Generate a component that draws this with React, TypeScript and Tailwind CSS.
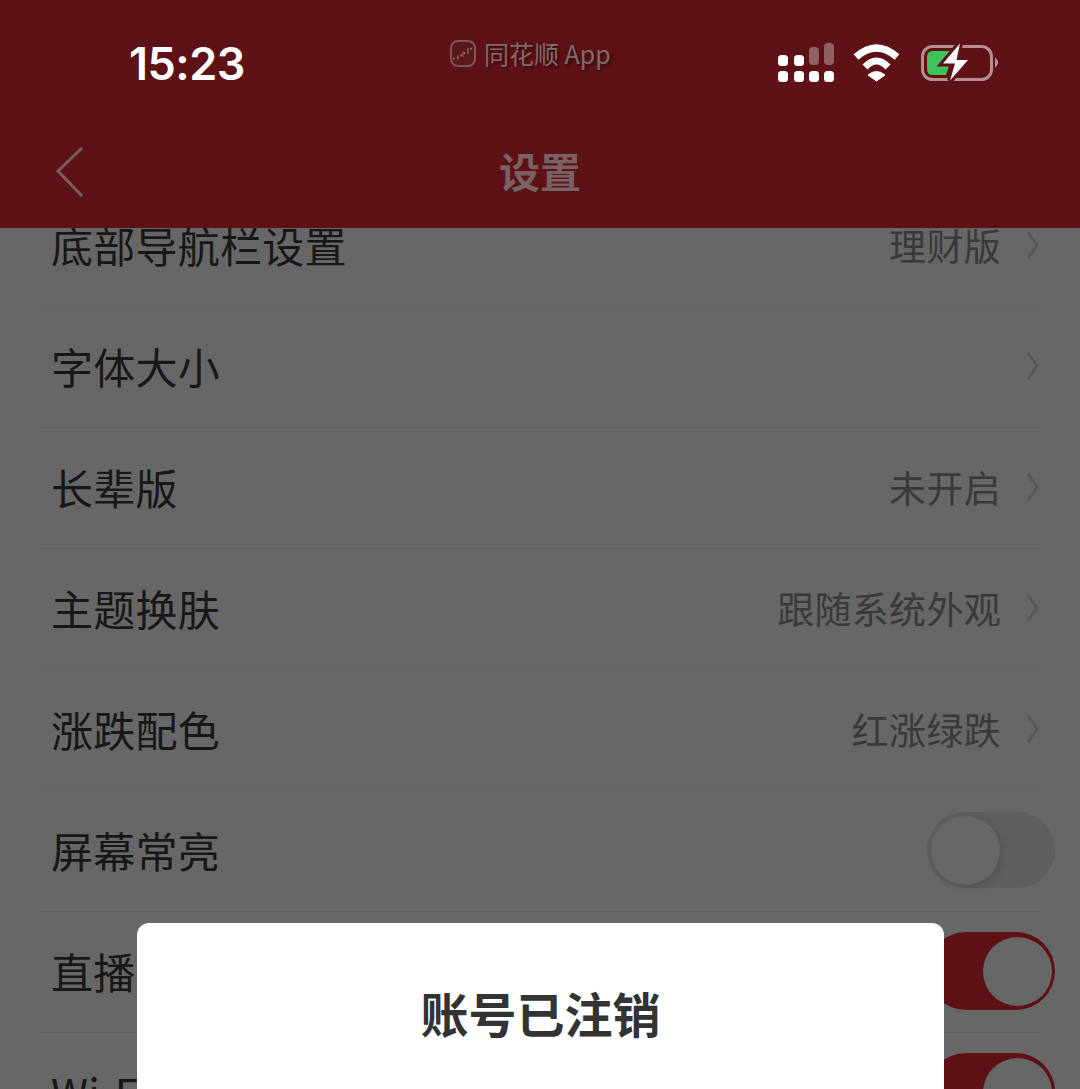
const CJK = "font-['Noto_Sans_CJK_SC','Noto_Sans',sans-serif]"

/* Lignes de la liste des réglages */
const rows = [
    { label: '底部导航栏设置', value: '理财版', first: true },
    { label: '字体大小' },
    { label: '长辈版', value: '未开启' },
    { label: '主题换肤', value: '跟随系统外观' },
    { label: '涨跌配色', value: '红涨绿跌' },
    { label: '屏幕常亮', toggle: 'off' },
    { label: '直播小窗', toggle: 'on' },
    { label: 'Wi-Fi下自动播放', toggle: 'on' },
]

const Chevron = () => (
    <svg width="14" height="32" viewBox="0 0 14 32" fill="none" className="ml-[25px] shrink-0">
        <path d="M2 3 L11 16 L2 29" stroke="#575757" strokeWidth="2.5" />
    </svg>
)

const Toggle = ({ on }: { on: boolean }) => {
    if (on) {
        return (
            <div className="absolute right-[-15px] top-[20px] flex h-[78px] w-[128px] items-center justify-end rounded-full bg-[#5f1215] pr-[3px]">
                <div className="h-[69px] w-[69px] rounded-full bg-[#676767]" />
            </div>
        )
    }
    return (
        <div className="absolute right-[-15px] top-[21px] flex h-[76px] w-[128px] items-center rounded-full bg-[#5f5f5f] pl-[4px]">
            <div className="h-[69px] w-[69px] rounded-full bg-[#676767] shadow-[3px_3px_8px_rgba(0,0,0,0.12)]" />
        </div>
    )
}

const Row = ({ row }: { row: any }) => (
    <div className="relative mx-[40px] flex h-[121px] items-center border-b border-[#606060] pb-[2px] pl-[11px]">
        <span className={`${CJK} text-[42px] leading-none tracking-[0.25px] text-[#181818]`}>{row.label}</span>
        {row.value !== undefined || !row.toggle ? (
            <div className="ml-auto flex items-center">
                {row.value && <span className={`${CJK} text-[37px] leading-none tracking-[0.3px] text-[#3a3a3a]`}>{row.value}</span>}
                <Chevron />
            </div>
        ) : (
            <Toggle on={row.toggle === 'on'} />
        )}
    </div>
)

const StatusIcons = () => (
    <svg width="224" height="44" viewBox="0 0 224 44" fill="none">
        {/* réseau */}
        <g fill="#ffffff">
            <rect x="0" y="13" width="10" height="11" rx="3.5" />
            <rect x="16" y="13" width="10" height="11" rx="3.5" />
            <rect x="0" y="29" width="10" height="11" rx="3.5" />
            <rect x="16" y="29" width="10" height="11" rx="3.5" />
            <rect x="31" y="29" width="10" height="11" rx="3.5" />
            <rect x="46" y="29" width="10" height="11" rx="3.5" />
        </g>
        <rect x="31" y="5" width="10" height="18" rx="4" fill="#8f6162" />
        <rect x="46" y="1" width="10" height="22" rx="4" fill="#8f6162" />
        {/* wifi */}
        <g stroke="#ffffff" strokeWidth="7" fill="none">
            <path d="M78 15 Q98.5 -3 119 15" />
            <path d="M87 25 Q98.5 13 110 25" />
        </g>
        <path d="M90 33 Q98.5 26 107 33 L98.5 39 Z" fill="#ffffff" stroke="#ffffff" strokeWidth="1" />
        {/* batterie */}
        <rect x="144.5" y="4.5" width="69" height="33" rx="10" stroke="#b78f90" strokeWidth="3" />
        <path d="M155 9 H176 L168 33 H155 Q149 33 149 27 V15 Q149 9 155 9 Z" fill="#3fc25b" />
        <path d="M217 15 L220 19 V22 L217 26 Z" fill="#b78f90" />
        <path d="M182 1.5 L165 21.5 H177 L172 38.5 L190 18 H178.5 Z" fill="#ffffff" stroke="#5f1215" strokeWidth="6" paintOrder="stroke" />
    </svg>
)

const Watermark = () => (
    <div className="flex items-center gap-[8px]">
        <svg width="26" height="27" viewBox="0 0 26 27" fill="none">
            <rect x="1" y="1" width="24" height="25" rx="7" stroke="#7c5557" strokeWidth="2" fill="#5a1619" />
            <path d="M3 19 L9 17 L13 14 L18 11 L22 8" stroke="#8b6a6b" strokeWidth="2" strokeDasharray="2 2" />
            <path d="M8 15 V20 M13 11 V17 M18 8 V14" stroke="#7c5557" strokeWidth="1.5" />
        </svg>
        <span className={`${CJK} text-[25px] leading-none text-[#806a6b] [text-shadow:2px_2px_3px_rgba(0,0,0,0.45)]`}>同花顺 App</span>
    </div>
)

export default function App() {
    return (
        <div className="relative h-[1089px] w-[1080px] overflow-hidden bg-[#676767]">
            <div className="relative z-10 h-[228px] bg-[#5f1215]">
                <div className="flex h-[116px] pl-[129px]">
                    <div className="w-[321px] pt-[41px]">
                        <span className="font-['Inter',sans-serif] text-[45px] font-semibold leading-[46px] tracking-[-0.5px] text-white">15:23</span>
                    </div>
                    <div className="w-[328px] pt-[40px]">
                        <Watermark />
                    </div>
                    <div className="pt-[42px]">
                        <StatusIcons />
                    </div>
                </div>
                <div className="relative flex h-[112px] items-center justify-center pb-[4px]">
                    <svg width="30" height="52" viewBox="0 0 30 52" fill="none" className="absolute left-[55px] top-[30px]">
                        <path d="M27 2 L3 25 L27 50" stroke="#7a5f60" strokeWidth="3" />
                    </svg>
                    <span className={`${CJK} text-[41px] font-bold leading-none text-[#7a6163]`}>设置</span>
                </div>
            </div>
            <div className="mt-[-42px]">
                {rows.map((row) => (
                    <Row key={row.label} row={row} />
                ))}
            </div>
            <div className="absolute left-[137px] top-[923px] h-[300px] w-[807px] rounded-[12px] bg-white pt-[65px] text-center">
                <span className={`${CJK} text-[48px] font-bold leading-none text-[#333333]`}>账号已注销</span>
            </div>
        </div>
    )
}
